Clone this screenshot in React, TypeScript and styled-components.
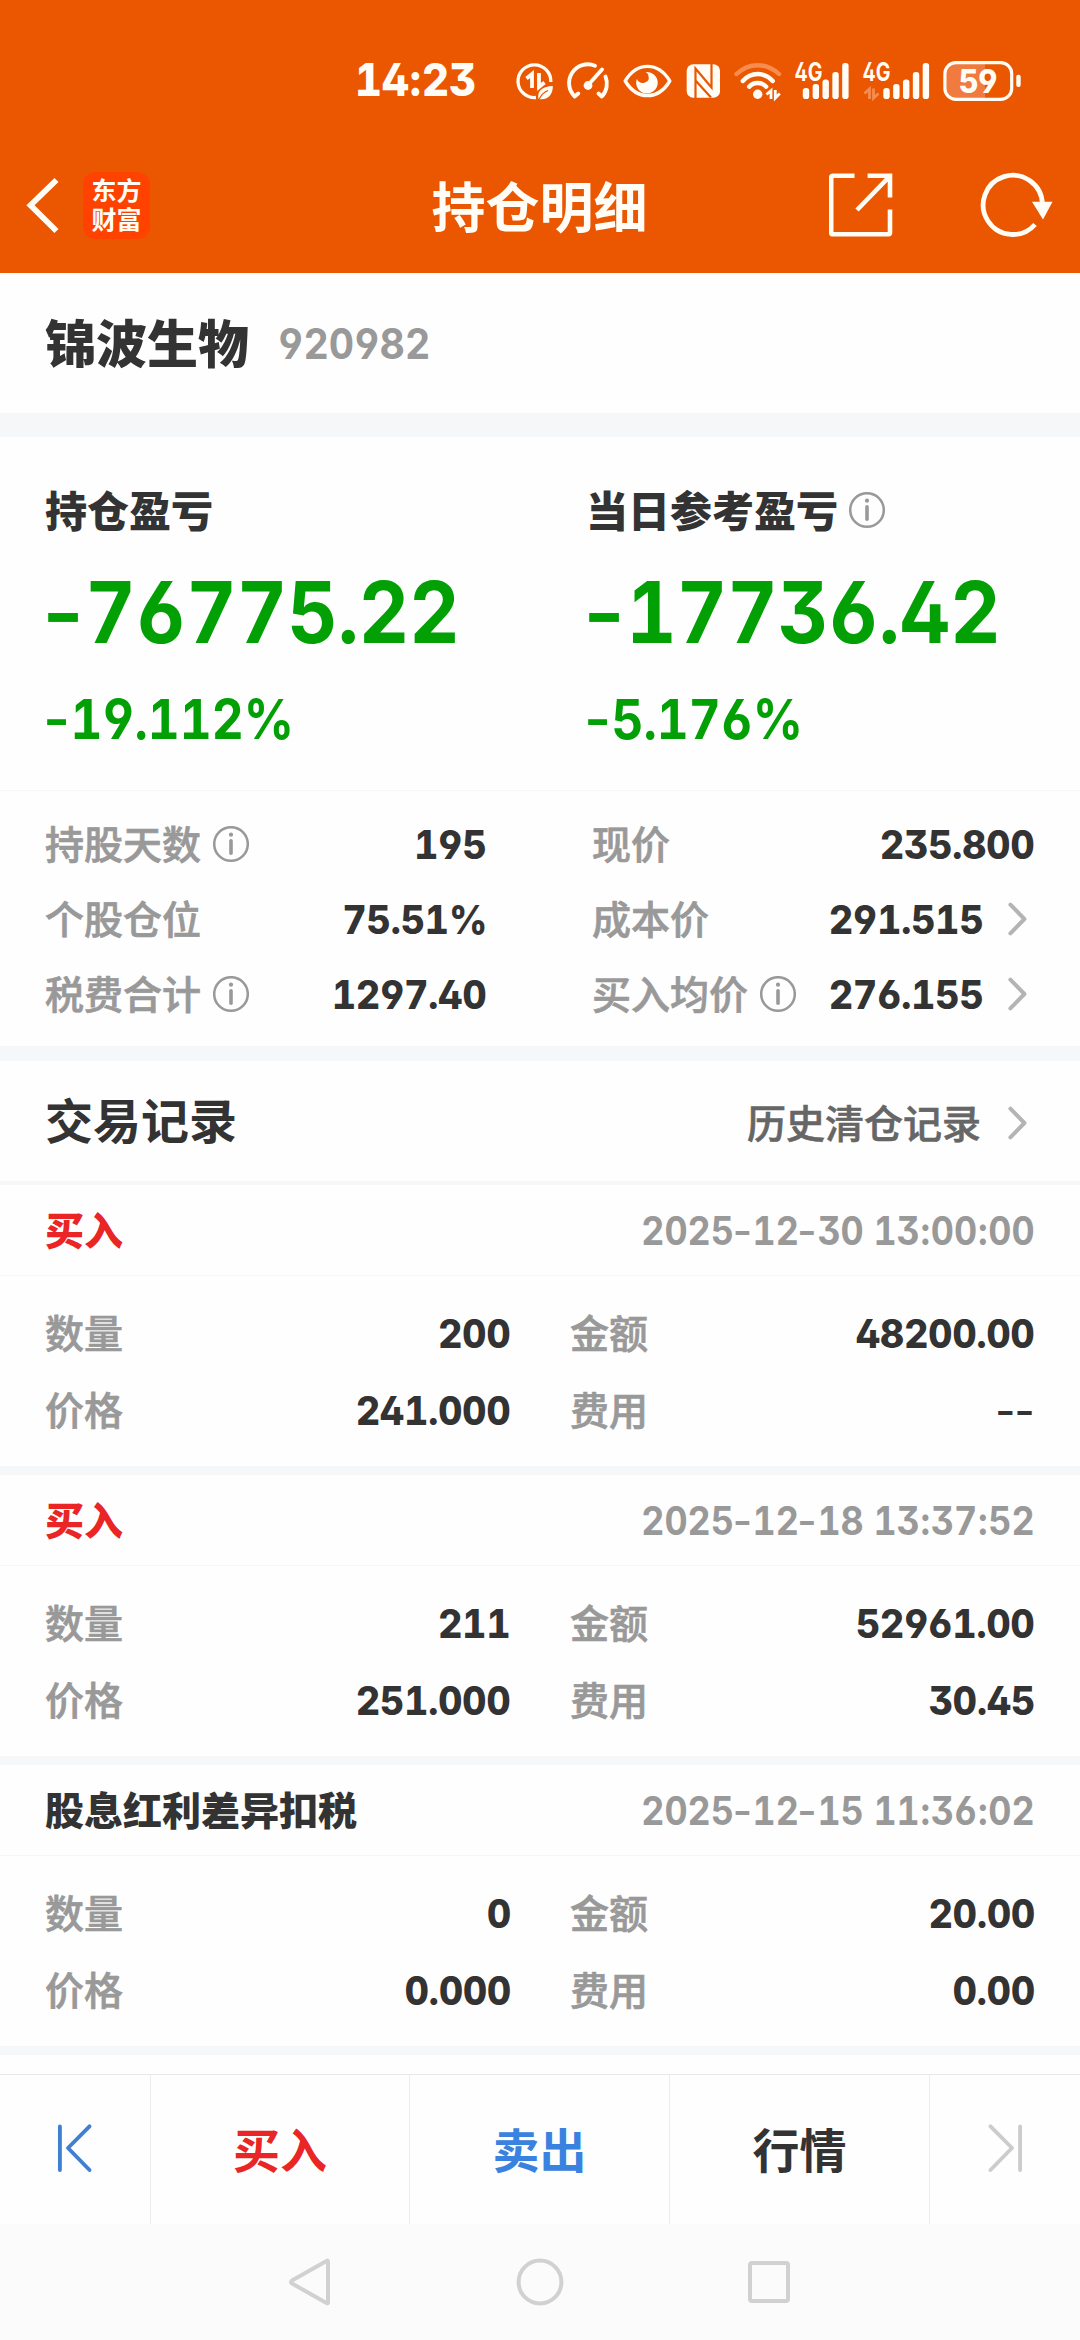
import React from 'react';
import styled, { createGlobalStyle } from 'styled-components';

const color = {
  brand: '#eb5600',
  logo: '#ff4200',
  ink: '#333333',
  sub: '#666666',
  muted: '#999999',
  arrow: '#b4b4b4',
  down: '#02a004',
  buy: '#e92526',
  sell: '#3a82df',
  band: '#f6f7f9',
  line: '#f5f6f6',
  onBrand: '#fffdf6',
};

const GlobalStyle = createGlobalStyle`
  * { box-sizing: border-box; }
  body {
    margin: 0;
    background: #fefefe;
    font-family: 'Noto Sans CJK SC', sans-serif;
    color: ${color.ink};
  }
`;

const Screen = styled.div`
  display: flex;
  flex-direction: column;
  width: 1080px;
  height: 2340px;
  overflow: hidden;
  background: #fefefe;
`;

/* ---------- text ---------- */

const Han = styled.span<{ $size: number; $weight?: number; $color?: string; $stroke?: number }>`
  display: block;
  flex: none;
  padding-bottom: 0.11em;
  font-size: ${p => p.$size}px;
  font-weight: ${p => p.$weight ?? 500};
  line-height: 1;
  white-space: nowrap;
  color: ${p => p.$color ?? color.ink};
  -webkit-text-stroke: ${p => p.$stroke ?? 0}px ${p => p.$color ?? color.ink};
`;

const Digits = styled.span<{
  $size: number;
  $weight: number;
  $color?: string;
  $stretch: number;
  $end?: boolean;
}>`
  display: block;
  flex: none;
  font-family: Inter, sans-serif;
  font-size: ${p => p.$size}px;
  font-weight: ${p => p.$weight};
  line-height: 1;
  white-space: pre;
  color: ${p => p.$color ?? color.ink};
  font-feature-settings: 'ss01', 'cv02', 'cv03', 'cv04', 'tnum', 'calt' 0;
  transform: scaleX(${p => p.$stretch});
  transform-origin: ${p => (p.$end ? 'right' : 'left')} center;
`;

const Dash = styled.span`
  display: inline-block;
  margin-right: 0.05em;
  font-weight: 600;
  font-feature-settings: 'calt' 0;
  transform: scaleX(1.16);
`;

const Colon = styled.span`
  padding: 0 0.02em;
`;

function Num(props: {
  value: string;
  size: number;
  weight: number;
  stretch: number;
  color?: string;
  end?: boolean;
}) {
  return (
    <Digits
      $size={props.size}
      $weight={props.weight}
      $stretch={props.stretch}
      $color={props.color}
      $end={props.end}
    >
      {props.value.split(/([-:])/).map((part, i) => {
        if (part === '-') return <Dash key={i}>-</Dash>;
        if (part === ':') return <Colon key={i}>:</Colon>;
        return part;
      })}
    </Digits>
  );
}

const Value = ({ children }: { children: string }) => (
  <Num value={children} size={39} weight={850} stretch={0.957} end />
);

/* ---------- top ---------- */

const Top = styled.header`
  flex: none;
  height: 273px;
  background: ${color.brand};
`;

const StatusBar = styled.div`
  display: flex;
  align-items: center;
  height: 139px;
  padding: 20px 55px 0 355px;
`;

const Clock = styled.div`
  flex: none;
  width: 155px;
`;

const StatusGlyph = styled.svg`
  display: block;
  flex: none;
  height: 55px;
`;

const GlyphText = styled.text`
  font-family: Inter, sans-serif;
  font-feature-settings: 'cv02', 'cv03', 'cv04', 'ss01';
  fill: ${color.onBrand};
`;

const TitleBar = styled.div`
  display: grid;
  grid-template-columns: 1fr auto 1fr;
  align-items: center;
  height: 132px;
  padding: 0 26px 0 25px;
`;

const TitleText = styled.div`
  padding-top: 5px;
`;

const TitleSide = styled.div<{ $right?: boolean }>`
  display: flex;
  align-items: center;
  justify-content: ${p => (p.$right ? 'flex-end' : 'flex-start')};
  gap: ${p => (p.$right ? 87 : 22)}px;
`;

const Logo = styled.div`
  display: flex;
  flex-direction: column;
  align-items: center;
  justify-content: center;
  width: 67px;
  height: 67px;
  padding-bottom: 3px;
  border-radius: 13px;
  background: ${color.logo};
  color: ${color.onBrand};
  font-size: 25px;
  font-weight: 700;
  line-height: 29px;
`;

const Icon = styled.svg`
  display: block;
  flex: none;
`;

const W = color.onBrand;
const FAINT = '#f68c50';

function Signal({ x }: { x: number }) {
  const tops = [86, 82, 77.5, 70, 61];
  return (
    <>
      {tops.map((t, i) => (
        <rect key={t} x={x + i * 9.85} y={t} width="6.4" height={97 - t} rx="2.8" fill={W} />
      ))}
    </>
  );
}

function StatusIcons() {
  return (
    <>
      <StatusGlyph width="50" viewBox="510 50 50 55">
        <path d="M550.8 80A16.4 16.4 0 1 0 536 95.5" fill="none" stroke={W} strokeWidth="3.3" />
        <path d="M526.5 76.5L532 72V86M539 71V85L544.5 80.5" fill="none" stroke={W} strokeWidth="3.8" />
        <path d="M538.5 97C536.5 88.5 543 84.5 552.8 84C553 92 548.5 98.5 538.5 97Z" fill={W} />
        <path d="M539 97.5Q542 91 548 88.5" fill="none" stroke={color.brand} strokeWidth="1.3" />
      </StatusGlyph>
      <StatusGlyph width="55" viewBox="560 50 55 55">
        <g fill="none" stroke={W} strokeWidth="3.9" strokeLinecap="round" strokeLinejoin="round">
          <path d="M578.3 91.5L574.7 94.5A18.8 18.8 0 0 1 595 63.7" />
          <path d="M605.5 74.5A18.8 18.8 0 0 1 601.8 94.5L598.5 91.5" />
          <path d="M602 67.5L589 82" />
        </g>
        <circle cx="588" cy="83.5" r="4.4" fill={W} />
      </StatusGlyph>
      <StatusGlyph width="65" viewBox="615 50 65 55">
        <path
          d="M625.2 79Q634 64.4 647.5 64.4T669.8 79Q661 93.6 647.5 93.6T625.2 79Z"
          fill="none"
          stroke={W}
          strokeWidth="3.4"
          strokeLinejoin="round"
        />
        <path d="M645.5 70A10.8 10.8 0 1 1 636.8 77Q640 82.5 645 80.5T648.5 74.5Q648.5 71.5 645.5 70Z" fill={W} />
      </StatusGlyph>
      <StatusGlyph width="45" viewBox="680 50 45 55">
        <rect x="686.7" y="62.3" width="33.3" height="33.4" rx="6.5" fill={W} />
        <path
          d="M695.5 96V66.5L711.5 85.5V62M696 79L711 95.5"
          fill="none"
          stroke={color.brand}
          strokeWidth="2.2"
        />
      </StatusGlyph>
      <StatusGlyph width="65" viewBox="725 50 65 55">
        <g fill="none" strokeWidth="4.4" strokeLinecap="round">
          <path d="M736.5 72Q746 63.2 757.7 63.2T779 72" stroke={FAINT} />
          <path d="M742.8 79Q749 72 757.7 72T772.7 79" stroke={W} />
          <path d="M749.2 84.7Q752.5 81 757.7 81T766.2 84.7" stroke={W} />
        </g>
        <circle cx="757.7" cy="92.3" r="4.7" fill={W} />
        <path d="M766.5 92.5L771 88.5V97M775.3 88V96L779.8 91.5" fill="none" stroke={W} strokeWidth="2.8" />
      </StatusGlyph>
      <StatusGlyph width="65" viewBox="790 50 65 55">
        <GlyphText x="794.5" y="79" fontSize="25" fontWeight="700" textLength="28" lengthAdjust="spacingAndGlyphs">
          4G
        </GlyphText>
        <Signal x={802.8} />
      </StatusGlyph>
      <StatusGlyph width="80" viewBox="855 50 80 55">
        <GlyphText x="862.5" y="79" fontSize="25" fontWeight="700" textLength="28" lengthAdjust="spacingAndGlyphs">
          4G
        </GlyphText>
        <path d="M864.5 91.5L869.5 87V97M873.5 86.5V96L878.5 91.5" fill="none" stroke={FAINT} strokeWidth="2.8" />
        <Signal x={883.3} />
      </StatusGlyph>
      <StatusGlyph width="90" viewBox="935 50 90 55">
        <path d="M985 61.5H956Q945.5 61.5 945.5 72V86Q945.5 97 956 97H985Z" fill="#f17b3e" />
        <rect x="944.9" y="60.6" width="66.8" height="36.8" rx="11" fill="none" stroke={W} strokeWidth="3.2" />
        <rect x="1016.3" y="72.8" width="4.4" height="12.2" rx="2" fill={W} />
        <GlyphText x="978" y="91" fontSize="33" fontWeight="800" textAnchor="middle" textLength="39" lengthAdjust="spacingAndGlyphs">
          59
        </GlyphText>
      </StatusGlyph>
    </>
  );
}

const BackIcon = () => (
  <Icon width="36" height="60" viewBox="25 175 36 60">
    <path d="M56.5 180L30.5 205.2L56.5 231" fill="none" stroke={W} strokeWidth="5.8" />
  </Icon>
);

const ShareIcon = () => (
  <Icon width="64" height="64" viewBox="828 173.5 64 64">
    <g fill="none" stroke={W} strokeWidth="4.6">
      <path d="M853.5 176.2H832Q830.2 176.2 830.2 178V233Q830.2 234.8 832 234.8H887.5Q889 234.8 889 233V210" />
      <path d="M866.6 176.2H889V198M888.5 177L856 210.5" />
    </g>
  </Icon>
);

const RefreshIcon = () => (
  <Icon width="74" height="66" viewBox="978 172 74 66">
    <path d="M1040.4 204A29.6 29.6 0 1 0 1033 224.5" fill="none" stroke={W} strokeWidth="4.8" />
    <path d="M1030 201.7H1050.5L1041 219.5Z" fill={W} />
  </Icon>
);

/* ---------- shared icons ---------- */

const InfoIcon = () => (
  <Icon width="36" height="38" viewBox="-18 -18 36 38">
    <circle r="16.8" fill="none" stroke={color.muted} strokeWidth="2.5" />
    <circle cy="-9.3" r="2.1" fill={color.muted} />
    <path d="M0 -3.2V9.3" stroke={color.muted} strokeWidth="3.6" strokeLinecap="round" />
  </Icon>
);

const Chevron = () => (
  <Icon width="19" height="34" viewBox="0 0 19 34">
    <path
      d="M2.4 2.6L16.4 17L2.4 31.4"
      fill="none"
      stroke={color.arrow}
      strokeWidth="4"
      strokeLinecap="round"
      strokeLinejoin="round"
    />
  </Icon>
);

/* ---------- content ---------- */

const Band = styled.div<{ $h: number }>`
  flex: none;
  height: ${p => p.$h}px;
  background: ${color.band};
`;

const StockRow = styled.section`
  display: flex;
  flex: none;
  align-items: center;
  gap: 29px;
  height: 140px;
  padding: 2px 45px 0;
`;

const Profit = styled.section`
  display: grid;
  flex: none;
  grid-template-columns: 541px 1fr;
  height: 354px;
  padding: 43px 0 0 45px;
  border-bottom: 1px solid ${color.line};
`;

const ProfitCol = styled.div`
  display: flex;
  flex-direction: column;
`;

const ProfitLine = styled.div<{ $h: number }>`
  display: flex;
  align-items: center;
  gap: 11px;
  height: ${p => p.$h}px;
`;

const Stats = styled.section`
  display: grid;
  flex: none;
  grid-template-columns: 442px 443px;
  grid-auto-rows: 75px;
  column-gap: 105px;
  height: 255px;
  padding: 16px 45px 0;
`;

const Cell = styled.div`
  display: flex;
  align-items: center;
  gap: 12px;
`;

const CellEnd = styled.div`
  display: flex;
  align-items: center;
  gap: 24px;
  margin-left: auto;
`;

const ArrowSlot = styled.span`
  display: block;
  padding: 0 8px 2px 0;
`;

const SectionHead = styled.section`
  display: flex;
  flex: none;
  align-items: center;
  justify-content: space-between;
  height: 120px;
  padding: 0 45px;
`;

const HistoryLink = styled.div`
  display: flex;
  align-items: center;
  gap: 27px;
  padding: 6px 0 0;
`;

const RecordHead = styled.div`
  display: flex;
  flex: none;
  align-items: center;
  justify-content: space-between;
  height: 91px;
  padding: 1px 45px 0;
  border-bottom: 1px solid ${color.line};
`;

const RecordBody = styled.div`
  display: grid;
  flex: none;
  grid-template-columns: 466px 465px;
  grid-auto-rows: 77px;
  column-gap: 59px;
  height: 190px;
  padding: 19px 45px 0;
`;

type Stat = { label: string; value: string; info?: boolean; arrow?: boolean };

const stats: Stat[] = [
  { label: '持股天数', value: '195', info: true },
  { label: '现价', value: '235.800' },
  { label: '个股仓位', value: '75.51%' },
  { label: '成本价', value: '291.515', arrow: true },
  { label: '税费合计', value: '1297.40', info: true },
  { label: '买入均价', value: '276.155', info: true, arrow: true },
];

const records = [
  { kind: '买入', buy: true, time: '2025-12-30 13:00:00', cells: ['200', '48200.00', '241.000', '--'] },
  { kind: '买入', buy: true, time: '2025-12-18 13:37:52', cells: ['211', '52961.00', '251.000', '30.45'] },
  { kind: '股息红利差异扣税', buy: false, time: '2025-12-15 11:36:02', cells: ['0', '20.00', '0.000', '0.00'] },
];

const cellLabels = ['数量', '金额', '价格', '费用'];

const Label = ({ children }: { children: string }) => (
  <Han $size={39} $weight={500} $stroke={0.7} $color={color.muted}>
    {children}
  </Han>
);

const profits = [
  { label: '持仓盈亏', amount: '-76775.22', rate: '-19.112%', info: false },
  { label: '当日参考盈亏', amount: '-17736.42', rate: '-5.176%', info: true },
];

/* ---------- bottom ---------- */

const ActionBar = styled.nav`
  display: grid;
  flex: none;
  grid-template-columns: 151px 259px 260px 260px 150px;
  height: 150px;
  margin-top: auto;
  border-top: 1px solid #e9e9e9;
`;

const Action = styled.div`
  display: flex;
  align-items: center;
  justify-content: center;
  padding-top: 1px;
  &:not(:last-child) { border-right: 1px solid #ececec; }
`;

const StepIcon = styled.svg<{ $flip?: boolean }>`
  display: block;
  margin-top: -4px;
  transform: ${p => (p.$flip ? 'scaleX(-1)' : 'none')};
`;

const Step = ({ tone, flip }: { tone: string; flip?: boolean }) => (
  <StepIcon $flip={flip} width="36" height="50" viewBox="58 2122.5 36 50">
    <path
      d="M60.9 2126V2169.5M90.5 2125.8L69 2147.5L90.5 2169.5"
      fill="none"
      stroke={tone}
      strokeWidth="3.9"
      strokeLinecap="round"
      strokeLinejoin="round"
    />
  </StepIcon>
);

const SystemNav = styled.footer`
  display: flex;
  flex: none;
  align-items: center;
  justify-content: center;
  gap: 179px;
  height: 116px;
  background: #fbfbfb;
`;

const NavIcon = ({ children }: { children: React.ReactNode }) => (
  <Icon width="50" height="50" viewBox="-25 -25 50 50">
    <g fill="none" stroke="#d1d1d1" strokeWidth="4" strokeLinejoin="round">
      {children}
    </g>
  </Icon>
);

export default function App() {
  return (
    <Screen>
      <GlobalStyle />
      <Top>
        <StatusBar>
          <Clock>
            <Num value="14:23" size={45} weight={800} stretch={0.93} color={W} />
          </Clock>
          <StatusIcons />
        </StatusBar>
        <TitleBar>
          <TitleSide>
            <BackIcon />
            <Logo>
              <span>东方</span>
              <span>财富</span>
            </Logo>
          </TitleSide>
          <TitleText>
            <Han $size={54} $weight={700} $color={W}>
              持仓明细
            </Han>
          </TitleText>
          <TitleSide $right>
            <ShareIcon />
            <RefreshIcon />
          </TitleSide>
        </TitleBar>
      </Top>

      <StockRow>
        <Han $size={51} $weight={800}>
          锦波生物
        </Han>
        <Num value="920982" size={42} weight={650} stretch={0.935} color={color.muted} />
      </StockRow>
      <Band $h={24} />

      <Profit>
        {profits.map(p => (
          <ProfitCol key={p.label}>
            <ProfitLine $h={62}>
              <Han $size={42} $weight={800}>
                {p.label}
              </Han>
              {p.info && <InfoIcon />}
            </ProfitLine>
            <ProfitLine $h={140}>
              <Num value={p.amount} size={85} weight={680} stretch={0.919} color={color.down} />
            </ProfitLine>
            <ProfitLine $h={74}>
              <Num value={p.rate} size={55} weight={680} stretch={0.9} color={color.down} />
            </ProfitLine>
          </ProfitCol>
        ))}
      </Profit>

      <Stats>
        {stats.map(s => (
          <Cell key={s.label}>
            <Label>{s.label}</Label>
            {s.info && <InfoIcon />}
            <CellEnd>
              <Value>{s.value}</Value>
              {s.arrow && (
                <ArrowSlot>
                  <Chevron />
                </ArrowSlot>
              )}
            </CellEnd>
          </Cell>
        ))}
      </Stats>
      <Band $h={15} />

      <SectionHead>
        <Han $size={48} $weight={700}>
          交易记录
        </Han>
        <HistoryLink>
          <Han $size={39} $weight={500} $stroke={0.6} $color={color.sub}>
            历史清仓记录
          </Han>
          <ArrowSlot>
            <Chevron />
          </ArrowSlot>
        </HistoryLink>
      </SectionHead>
      <Band $h={4} />

      {records.map(r => (
        <React.Fragment key={r.time}>
          <RecordHead>
            <Han $size={39} $weight={800} $color={r.buy ? color.buy : color.ink}>
              {r.kind}
            </Han>
            <Num value={r.time} size={39} weight={650} stretch={0.92} color={color.muted} end />
          </RecordHead>
          <RecordBody>
            {r.cells.map((c, i) => (
              <Cell key={cellLabels[i]}>
                <Label>{cellLabels[i]}</Label>
                <CellEnd>
                  <Value>{c}</Value>
                </CellEnd>
              </Cell>
            ))}
          </RecordBody>
          <Band $h={9} />
        </React.Fragment>
      ))}

      <ActionBar>
        <Action>
          <Step tone="#4080d2" />
        </Action>
        <Action>
          <Han $size={47} $weight={700} $color={color.buy}>
            买入
          </Han>
        </Action>
        <Action>
          <Han $size={47} $weight={700} $color={color.sell}>
            卖出
          </Han>
        </Action>
        <Action>
          <Han $size={47} $weight={700}>
            行情
          </Han>
        </Action>
        <Action>
          <Step tone="#cccccc" flip />
        </Action>
      </ActionBar>
      <SystemNav>
        <NavIcon>
          <path d="M17 -20.5V20.5Q17 22 15.5 21L-19 1.5Q-21 0 -19 -1.5L15.5 -21Q17 -22 17 -20.5Z" />
        </NavIcon>
        <NavIcon>
          <circle r="21.4" />
        </NavIcon>
        <NavIcon>
          <rect x="-19" y="-19" width="38" height="38" rx="2" />
        </NavIcon>
      </SystemNav>
    </Screen>
  );
}
